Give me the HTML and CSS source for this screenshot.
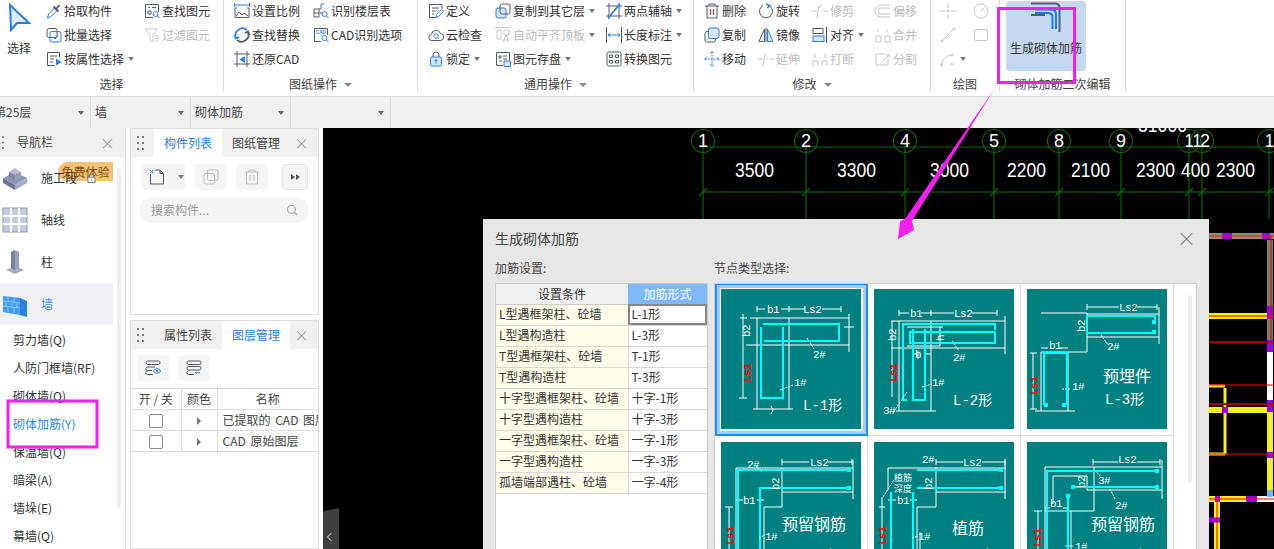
FILE: index.html
```html
<!DOCTYPE html>
<html lang="zh">
<head>
<meta charset="utf-8">
<title>生成砌体加筋</title>
<link rel="stylesheet" href="styles.css">
</head>
<body>
<div class="app">

<header class="ribbon">
  <section class="group g1">
    <div class="body">
      <div class="big-select">
        <svg class="arrow-ic" viewBox="0 0 32 32"><path d="M10 5L29 23H17L11 30Z"/></svg>
        <span>选择</span>
      </div>
      <div class="col">
        <div class="item"><svg class="ic" viewBox="0 0 16 16"><path class="b" d="M1.500 15l1-4 6-6 2.500 2.500-6 6z"/><path class="thick" d="M7.500 3.500l5 5M10.500 5.500l3-3.500"/></svg>拾取构件</div>
        <div class="item"><svg class="ic" viewBox="0 0 16 16"><rect x="1" y="1.500" width="10" height="9" rx="2"/><rect class="b" x="4" y="4.500" width="11" height="10.500" rx="2"/><path class="b" d="M7 10l2 2 3.500-4"/></svg>批量选择</div>
        <div class="item"><svg class="ic" viewBox="0 0 16 16"><path d="M13.500 6V1.500h-12v13H9M4 5h7M4 8h4M4 11h3"/><path class="f" d="M10 7.500l5.500 3.500-5.500 3.500z"/></svg>按属性选择<i class="caret"></i></div>
      </div>
      <div class="col">
        <div class="item"><svg class="ic" viewBox="0 0 16 16"><path d="M9 14.500H1.500v-13h13V9M4 4.500h2M8 4.500h4M4 8h3v3H4z"/><circle class="b" cx="11.500" cy="11" r="2.500"/><path class="b" d="M13.500 13l2 2"/></svg>查找图元</div>
        <div class="item off"><svg class="ic" viewBox="0 0 16 16"><path d="M1 2h13L9 8v7l-3-2V8zM11 9h4M11 11.500h4M11 14h4"/></svg>过滤图元</div>
      </div>
    </div>
    <div class="glabel">选择</div>
  </section>

  <section class="group g2">
    <div class="body">
      <div class="col">
        <div class="item"><svg class="ic" viewBox="0 0 16 16"><path class="b" d="M.500 0v4M15.500 0v4M1 2h14"/><path d="M3 5H1v9.500h14V5h-2"/><path d="M2 13l3-4 3 3 2-2 4 3"/></svg>设置比例</div>
        <div class="item"><svg class="ic" viewBox="0 0 16 16"><path class="b thick" d="M13 3A7 7 0 0 0 2 11M.500 8L2 11.500 5 10"/><path class="thick" d="M3 13A7 7 0 0 0 14 5M15.500 8L14 4.500 11 6"/></svg>查找替换</div>
        <div class="item"><svg class="ic" viewBox="0 0 16 16"><path d="M3 0v16M0 3h16M13 0v16M0 13h16"/><path class="b thick" d="M11 6L7 8.500l4 2.500M7 8.500h4"/></svg>还原CAD</div>
      </div>
      <div class="col">
        <div class="item"><svg class="ic" viewBox="0 0 16 16"><path class="b" d="M8 1h3M8 1v5"/><path d="M1 6h5v4H1zM1 10v4h5v-4M6 6h2M7 10h2"/><circle class="b" cx="11.500" cy="11" r="2.500"/><path class="b" d="M13.500 13l2 2"/></svg>识别楼层表</div>
        <div class="item"><svg class="ic" viewBox="0 0 16 16"><path d="M8 14.500H1.500v-13h13V8"/><text class="mini" x="3" y="7">CAD</text><circle class="b" cx="11.500" cy="11" r="2.500"/><path class="b" d="M13.500 13l2 2"/></svg>CAD识别选项</div>
      </div>
    </div>
    <div class="glabel">图纸操作<i class="caret wide"></i></div>
  </section>

  <section class="group g3">
    <div class="body">
      <div class="col">
        <div class="item"><svg class="ic" viewBox="0 0 16 16"><path d="M14 6V1.500H1.500v13H8M4 5h7M4 8h3M4 11h2"/><path class="b" d="M8 14.500l.5-3 5-5 2 2-5 5z"/></svg>定义</div>
        <div class="item"><svg class="ic" viewBox="0 0 16 16"><path d="M4 13.500a3 3 0 0 1-.5-6 4.500 4.500 0 0 1 8.800-1A3.500 3.500 0 0 1 12 13.500z"/><circle class="b" cx="8" cy="9" r="2.200"/><path class="b" d="M9.500 10.500l1.500 1.500"/></svg>云检查</div>
        <div class="item"><svg class="ic" viewBox="0 0 16 16"><path d="M5 6V4a3 3 0 0 1 6 0v2"/><rect class="fl" x="2.500" y="6" width="11" height="9" rx="1.500"/><path class="w" d="M8 8.500v4M6.500 10L8 8.500 9.500 10"/></svg>锁定<i class="caret"></i></div>
      </div>
      <div class="col">
        <div class="item"><svg class="ic" viewBox="0 0 16 16"><rect class="fl" x="1" y="5" width="10" height="10" rx="2"/><rect x="5" y="1" width="10" height="10" rx="2"/></svg>复制到其它层<i class="caret"></i></div>
        <div class="item off"><svg class="ic" viewBox="0 0 16 16"><path d="M0 .500h16M2 3h4v9H2zM9 3h5v5H9zM8 15l3-7 3 7M9 13h4"/></svg>自动平齐顶板<i class="caret"></i></div>
        <div class="item"><svg class="ic" viewBox="0 0 16 16"><path d="M8 14.500H1.500v-13h13V9M4 5h2v2H4zM8 5h4M4 10h3M8 8h4"/><path class="fl" d="M9 10h6.500v5.500H9z"/></svg>图元存盘<i class="caret"></i></div>
      </div>
      <div class="col">
        <div class="item"><svg class="ic" viewBox="0 0 16 16"><path d="M3 0v16M0 3h16M13 0v16M0 13h16"/><path class="b thick" d="M2 15L14 1"/></svg>两点辅轴<i class="caret"></i></div>
        <div class="item"><svg class="ic" viewBox="0 0 16 16"><path d="M.500 0v16M15.500 0v16"/><path class="b" d="M2 8h12M4.500 6L2 8l2.500 2M11.500 6L14 8l-2.500 2"/></svg>长度标注<i class="caret"></i></div>
        <div class="item"><svg class="ic" viewBox="0 0 16 16"><rect x="1" y="1" width="14" height="14" rx="1.500"/><path d="M3.500 4h3v2.500h-3zM9.500 4h3v2.500h-3zM9.500 9.500h3V12h-3zM3.500 9.500h3V12h-3z"/><path class="b" d="M7.500 5.500H8M8 10.500h.5"/></svg>转换图元</div>
      </div>
    </div>
    <div class="glabel">通用操作<i class="caret wide"></i></div>
  </section>

  <section class="group g4">
    <div class="body">
      <div class="col">
        <div class="item"><svg class="ic" viewBox="0 0 16 16"><path d="M1 3h14M5 3V1h6v2M3 3v12h10V3"/><path class="r" d="M6.500 6v6M9.500 6v6"/></svg>删除</div>
        <div class="item"><svg class="ic" viewBox="0 0 16 16"><rect x="1" y="4.500" width="10.500" height="10.500" rx="2"/><rect class="fl" x="4.500" y="1" width="10.500" height="10.500" rx="2"/></svg>复制</div>
        <div class="item"><svg class="ic" viewBox="0 0 16 16"><path class="b" d="M8 .500v15M.500 8h15M6 2.500L8 .500l2 2M6 13.500l2 2 2-2M2.500 6L.500 8l2 2M13.500 6l2 2-2 2" stroke-dasharray="2 1"/></svg>移动</div>
      </div>
      <div class="col">
        <div class="item"><svg class="ic" viewBox="0 0 16 16"><path d="M5 2.500a6.500 6.500 0 1 0 6 0"/><path class="b thick" d="M8 1l3.500 1.500L9.500 5"/></svg>旋转</div>
        <div class="item"><svg class="ic" viewBox="0 0 16 16"><path d="M6.500 2L1 14.500h5.500z"/><path class="fl" d="M9.500 2l5.500 12.500H9.500z"/><path d="M8 1v14"/></svg>镜像</div>
        <div class="item off"><svg class="ic" viewBox="0 0 16 16"><path d="M0 8h5M7 3L5 15M9 8h1.500M12 8h4" /></svg>延伸</div>
      </div>
      <div class="col">
        <div class="item off"><svg class="ic" viewBox="0 0 16 16"><path d="M0 8h5M7 3L5 15M9 8h1.500M12 8h4M10 1l-3 4"/></svg>修剪</div>
        <div class="item"><svg class="ic" viewBox="0 0 16 16"><rect x="1" y="1.500" width="10" height="5"/><rect class="fl" x="1" y="9" width="11" height="5.500"/><path d="M14.500 0v16"/></svg>对齐<i class="caret"></i></div>
        <div class="item off"><svg class="ic" viewBox="0 0 16 16"><path d="M1 15v-5h5v5M10 15v-5h5v5M4 7l-2-2 2-2M12 7l2-2-2-2M1.500 5h2M12.500 5h2"/></svg>打断</div>
      </div>
      <div class="col">
        <div class="item off"><svg class="ic" viewBox="0 0 16 16"><path d="M15 2H6a6 6 0 0 0 0 12h9M15 5H6a3 3 0 0 0 0 6h9"/></svg>偏移</div>
        <div class="item off"><svg class="ic" viewBox="0 0 16 16"><path d="M1 15v-6h5v6zM10 15V9h5v6zM3 2v3M3 6.500h.5M12 2v3M12.500 6.500h.5"/></svg>合并</div>
        <div class="item off"><svg class="ic" viewBox="0 0 16 16"><path d="M10 3H1v11h12V8M8 10l6-6M11 4h3v3"/></svg>分割</div>
      </div>
    </div>
    <div class="glabel">修改<i class="caret wide"></i></div>
  </section>

  <section class="group g5">
    <div class="body">
      <div class="col">
        <div class="item off"><svg class="ic" viewBox="0 0 16 16"><path d="M8 0v5M8 11v5M0 8h5M11 8h5"/><circle cx="8" cy="8" r="1.200"/></svg></div>
        <div class="item off"><svg class="ic" viewBox="0 0 16 16"><path d="M2 14L14 2"/><circle cx="2" cy="14" r="1"/><circle cx="14" cy="2" r="1"/></svg></div>
        <div class="item off"><svg class="ic" viewBox="0 0 16 16"><path d="M1.500 15a11 11 0 0 1 10-11"/><circle cx="1.500" cy="14" r="1"/><circle cx="12" cy="4" r="1"/><circle cx="12" cy="13" r="1"/></svg><i class="caret"></i></div>
      </div>
      <div class="col">
        <div class="item off"><svg class="ic" viewBox="0 0 16 16"><circle cx="8" cy="8" r="7"/><path d="M8 8l3.500-3.500"/></svg></div>
        <div class="item off"><svg class="ic" viewBox="0 0 16 16"><rect x="1.500" y="2.500" width="13" height="11" rx="1.500"/></svg></div>
      </div>
    </div>
    <div class="glabel">绘图</div>
  </section>

  <section class="group g6">
    <div class="body">
      <div class="big-active">
        <svg class="rebar-ic" viewBox="0 0 32 32"><path d="M0 2.500H24Q28.500 2.500 28.500 7V31M0 14H14"/><path class="blue" d="M4 8.500H20Q25 8.500 25 13.500V28M4 12H17Q21.500 12 21.500 16.500V28"/></svg>
        <span>生成砌体加筋</span>
      </div>
    </div>
    <div class="glabel">砌体加筋二次编辑</div>
  </section>
</header>

<nav class="selectors">
  <div class="select first"><span>第25层</span><i class="caret"></i></div>
  <div class="select"><span>墙</span><i class="caret"></i></div>
  <div class="select"><span>砌体加筋</span><i class="caret"></i></div>
  <div class="select"><span></span><i class="caret"></i></div>
</nav>

<main class="main">
  <aside class="nav">
    <div class="nav-head">
      <svg class="grip-one" viewBox="0 0 4 16"><circle cx="2" cy="2" r="1"/><circle cx="2" cy="7.500" r="1"/><circle cx="2" cy="13" r="1"/></svg>
      <span>导航栏</span><span class="close">×</span>
    </div>
    <div class="badge">免费体验</div>
    <div class="nav-track"></div>
    <div class="nav-big">
      <svg class="nav-ic" viewBox="0 0 26 26"><path fill="#8f97b5" d="M1 13l12-6 12 6-12 7z"/><path fill="#6d7596" d="M1 13v5l12 7v-5z"/><path fill="#a4abc6" d="M25 13v5l-12 7v-5z"/><path fill="#b5bad2" d="M7 7l6-4 6 4-6 3z"/><path fill="#7f87a6" d="M7 7v5l6 3v-5z"/><path fill="#949cb9" d="M19 7v5l-6 3v-5z"/></svg>
      <span>施工段</span>
      <svg class="lock-mini" viewBox="0 0 10 10"><path d="M1 3.500h8v6H1zM3 3.500V1h4v2.500M5 5.500v2"/></svg>
    </div>
    <div class="nav-big">
      <svg class="nav-ic" viewBox="0 0 26 26"><rect width="24" height="24" x="1" y="1" fill="#c5cbe0" stroke="#8b93b2"/><path stroke="#fff" stroke-width="2" d="M9 1v24M17 1v24M1 9h24M1 17h24"/></svg>
      <span>轴线</span>
    </div>
    <div class="nav-big">
      <svg class="nav-ic" viewBox="0 0 26 26"><path fill="#a7adc8" d="M4 21l9-4 9 4-9 4z"/><path fill="#7a82a3" d="M9 3l4-2v20l-4-2z"/><path fill="#99a0be" d="M13 1l4 2v16l-4 2z"/></svg>
      <span>柱</span>
    </div>
    <div class="nav-big on">
      <svg class="nav-ic" viewBox="0 0 26 26"><path fill="#3f9bf0" d="M1 5l17 2v17L1 21z"/><path fill="#2b82dc" d="M18 7l7 3v16l-7-2z"/><path stroke="#8cc4f7" fill="none" d="M1 10l17 2M1 15l17 2M6 6v5M12 7v5M4 11v5M10 12v5M15 12v5M6 16v5M12 17v5"/></svg>
      <span>墙</span>
    </div>
    <ul class="nav-list">
      <li>剪力墙(Q)</li>
      <li>人防门框墙(RF)</li>
      <li>砌体墙(Q)</li>
      <li class="on">砌体加筋(Y)</li>
      <li>保温墙(Q)</li>
      <li>暗梁(A)</li>
      <li>墙垛(E)</li>
      <li>幕墙(Q)</li>
    </ul>
  </aside>

  <div class="panels">
    <section class="panel upper">
      <div class="tabs">
        <svg class="grip" viewBox="0 0 7 15"><path d="M0 0h2v2H0zM5 0h2v2H5zM0 6h2v2H0zM5 6h2v2H5zM0 12h2v2H0zM5 12h2v2H5z"/></svg>
        <span class="tab on">构件列表</span><span class="tab">图纸管理</span>
        <span class="close">×</span>
      </div>
      <div class="tools">
        <button class="tool split"><svg class="ic ink" viewBox="0 0 16 16"><path d="M1.500 5v10h13V4.500L11 1H6"/><path d="M11 1v3.500h3.500"/><path class="b" d="M1 1l3 3M4 1L1 4"/></svg></button><button class="tool drop"><i class="caret"></i></button>
        <button class="tool w32"><svg class="ic off-ic" viewBox="0 0 16 16"><rect x="1" y="4.500" width="10.500" height="10.500" rx="1.500"/><rect x="4.500" y="1" width="10.500" height="10.500" rx="1.500"/></svg></button>
        <button class="tool w32"><svg class="ic off-ic" viewBox="0 0 16 16"><path d="M1 3h14M5 3V1h6v2M2.500 3v12h11V3M6 6v6M10 6v6"/></svg></button>
        <button class="tool more"><span class="tri-r"></span><span class="tri-r"></span></button>
      </div>
      <div class="search"><span>搜索构件...</span><svg class="search-ic" viewBox="0 0 12 12"><circle cx="5.500" cy="5.500" r="4"/><path d="M8.500 8.500L11 11"/></svg></div>
    </section>

    <section class="panel lower">
      <div class="tabs">
        <svg class="grip" viewBox="0 0 7 15"><path d="M0 0h2v2H0zM5 0h2v2H5zM0 6h2v2H0zM5 6h2v2H5zM0 12h2v2H0zM5 12h2v2H5z"/></svg>
        <span class="tab">属性列表</span><span class="tab on">图层管理</span>
        <span class="close">×</span>
      </div>
      <div class="tools lt">
        <button class="tool w32"><svg class="ic ink" viewBox="0 0 16 16"><rect x="1" y="1" width="14" height="3.500" rx="1.700"/><path d="M10 7H2.500a1.700 1.700 0 0 0 0 3.500H7M8 14.500H2.500a1.700 1.700 0 0 1 0-3.500"/><ellipse class="b" cx="12" cy="11" rx="3.500" ry="2.200"/><circle class="b" cx="12" cy="11" r=".8"/></svg></button>
        <button class="tool w32"><svg class="ic ink" viewBox="0 0 16 16"><rect x="1" y="1" width="14" height="3.500" rx="1.700"/><rect x="1" y="6.500" width="14" height="3.500" rx="1.700"/><path d="M8 14.500H2.500a1.700 1.700 0 0 1 0-3.500"/><path class="b" d="M9 12l1.200 1.500L11.500 12l1.200 1.500L14 12"/></svg></button>
      </div>
      <table class="layers">
        <colgroup><col class="c1"><col class="c2"><col></colgroup>
        <thead><tr><th>开 / 关</th><th>颜色</th><th>名称</th></tr></thead>
        <tbody>
          <tr><td><span class="check"></span></td><td><span class="tri-r gr"></span></td><td class="nm">已提取的 CAD 图层</td></tr>
          <tr><td><span class="check"></span></td><td><span class="tri-r gr"></span></td><td class="nm">CAD 原始图层</td></tr>
        </tbody>
      </table>
    </section>
  </div>

  <div class="canvas">
    <svg class="cad" viewBox="323 128 951 421">
      <g class="grn">
        <path d="M703 147H1274M703 192H1274M703 141V219M806 141V219M905 141V219M994 141V219M1059 141V219M1121 141V219M1189 141V219M1202 141V219M1269 141V219"/>
        <path d="M699 196l8-8M802 196l8-8M901 196l8-8M990 196l8-8M1055 196l8-8M1117 196l8-8M1185 196l8-8M1198 196l8-8M1265 196l8-8"/>
        <circle cx="703" cy="141" r="11.500"/><circle cx="806" cy="141" r="11.500"/><circle cx="905" cy="141" r="11.500"/><circle cx="994" cy="141" r="11.500"/><circle cx="1059" cy="141" r="11.500"/><circle cx="1121" cy="141" r="11.500"/><circle cx="1189" cy="141" r="11.500"/><circle cx="1202" cy="141" r="11.500"/><circle cx="1269" cy="141" r="11.500"/>
      </g>
      <g class="num">
        <text x="703" y="147">1</text><text x="806" y="147">2</text><text x="905" y="147">4</text><text x="994" y="147">5</text><text x="1059" y="147">8</text><text x="1121" y="147">9</text><text x="1193" y="147" textLength="17" lengthAdjust="spacingAndGlyphs">11</text><text x="1205" y="147">2</text><text x="1274" y="147" textLength="18" lengthAdjust="spacingAndGlyphs">15</text>
      </g>
      <g class="dim">
        <text x="735" y="177" textLength="39" lengthAdjust="spacingAndGlyphs">3500</text>
        <text x="837" y="177" textLength="39" lengthAdjust="spacingAndGlyphs">3300</text>
        <text x="930" y="177" textLength="39" lengthAdjust="spacingAndGlyphs">3000</text>
        <text x="1007" y="177" textLength="39" lengthAdjust="spacingAndGlyphs">2200</text>
        <text x="1071" y="177" textLength="39" lengthAdjust="spacingAndGlyphs">2100</text>
        <text x="1136" y="177" textLength="39" lengthAdjust="spacingAndGlyphs">2300</text>
        <text x="1181" y="177" textLength="29" lengthAdjust="spacingAndGlyphs">400</text>
        <text x="1216" y="177" textLength="39" lengthAdjust="spacingAndGlyphs">2300</text>
        <text x="1138" y="132" textLength="49" lengthAdjust="spacingAndGlyphs">31000</text>
      </g>
      <g class="walls">
        <path stroke="#8d8d72" stroke-width="6" d="M1205 236H1274"/><path stroke="#9a00f0" stroke-width="6" d="M1222 236H1232M1262 236H1270"/><path stroke="#e02020" d="M1205 236H1274"/>
        <path stroke="#f6f020" stroke-width="6" d="M1205 316H1267M1205 410H1267M1270 412V452M1270 458V490M1205 499H1246M1217 502V549"/>
        <path stroke="#f6f020" stroke-width="3" d="M1205 386H1225M1225 388V455M1205 454H1225"/>
        <path stroke="#808060" stroke-width="6" d="M1270 240V306M1270 319V340"/>
        <path stroke="#fff" stroke-width="6" d="M1270 352V400M1257 499H1274"/>
        <path stroke="#60c0f0" stroke-width="6" d="M1270 490V497"/>
        <path stroke="#9a00f0" stroke-width="6" d="M1270 306V319M1270 340V352M1270 400V412M1270 452V458M1222 410H1228M1215 499H1220M1246 499H1257"/>
        <path stroke="#9a00f0" stroke-width="5" d="M1209 520H1220"/>
        <path stroke="#f00000" d="M1205 316H1274M1205 385H1274M1205 454H1274M1271 236V340M1205 499H1274M1217 497V549"/>
        <path stroke="#a00000" stroke-width="2" d="M1205 342H1274M1205 404H1274"/>
      </g>
    </svg>
    <div class="edge-tab"></div>

    <section class="dialog">
      <header class="dlg-head"><h1>生成砌体加筋</h1><span class="dlg-x">×</span></header>
      <div class="dlg-body">
        <div class="dlg-left">
          <div class="dlg-label">加筋设置:</div>
          <div class="rules-wrap">
            <table class="rules">
              <thead><tr><th>设置条件</th><th class="hl">加筋形式</th></tr></thead>
              <tbody>
                <tr><td>L型遇框架柱、砼墙</td><td class="cur">L-1形</td></tr>
                <tr><td>L型遇构造柱</td><td>L-3形</td></tr>
                <tr><td>T型遇框架柱、砼墙</td><td>T-1形</td></tr>
                <tr><td>T型遇构造柱</td><td>T-3形</td></tr>
                <tr><td>十字型遇框架柱、砼墙</td><td>十字-1形</td></tr>
                <tr><td>十字型遇构造柱</td><td>十字-3形</td></tr>
                <tr><td>一字型遇框架柱、砼墙</td><td>一字-1形</td></tr>
                <tr><td>一字型遇构造柱</td><td>一字-3形</td></tr>
                <tr><td>孤墙端部遇柱、砼墙</td><td>一字-4形</td></tr>
              </tbody>
            </table>
          </div>
        </div>
        <div class="dlg-right">
          <div class="dlg-label">节点类型选择:</div>
          <div class="gallery">
            <div class="grid">

              <figure class="node sel">
                <svg class="dg" viewBox="0 0 140 140">
                  <path class="wl" d="M36 17v6M68 17v6M120 17v6M36 20h8M60 20h24M101 20h19M29 29H128M25 56H128M36 29V120M68 29V120M32 120H72M128 25V63M22 25V109M18 109h8M19 29h7M123 38h10M50 117l2 4-2 4"/>
                  <path class="cy" d="M62 38V109H40V38M42 35H118V52H43"/>
                  <path class="ld" d="M86 49l7 11M59 101l13-5"/>
                  <text class="sm" x="46" y="24">b1</text><text class="sm" x="82" y="24">Ls2</text>
                  <text class="sm" x="92" y="69">2#</text><text class="sm" x="73" y="97">1#</text>
                  <text class="sm" transform="translate(29,48) rotate(-90)">b2</text>
                  <text class="sm red" transform="translate(30,93) rotate(-90)">Ls1</text>
                  <text class="lg" x="82" y="121">L-1形</text>
                </svg>
              </figure>

              <figure class="node">
                <svg class="dg" viewBox="0 0 140 140">
                  <path class="wl" d="M25 21v6M57 21v6M123 21v6M25 24h10M47 24h33M98 24h25M17 32H131M17 59H131M25 32V122M57 32V122M22 122H62M131 27V65M18 32V108M33 38H66V57H33M66 38h3M44 62v8M38 65h5M50 65h7"/>
                  <path class="cy" d="M33 111H29V35H121V41M121 43H36V54H121V43M39 40V111H51V40"/>
                  <path class="ld" d="M78 52l7 10M48 98l10-3M33 103L19 124"/>
                  <text class="sm" x="36" y="28">b1</text><text class="sm" x="80" y="28">Ls2</text>
                  <text class="sm" x="41" y="69">b</text><text class="sm" x="79" y="72">2#</text>
                  <text class="sm" x="58" y="97">1#</text><text class="sm" x="9" y="125">3#</text>
                  <text class="sm" transform="translate(22,52) rotate(-90)">b2</text>
                  <text class="sm" transform="translate(70,52) rotate(-90)">h</text>
                  <text class="sm red" transform="translate(23,93) rotate(-90)">Ls1</text>
                  <text class="lg" x="79" y="116">L-2形</text>
                </svg>
              </figure>

              <figure class="node">
                <svg class="dg" viewBox="0 0 140 140">
                  <path class="wl" d="M60 15v6M130 15v6M60 18h32M110 18h20M14 24H60V63H14V122M60 25H132M60 48H132M132 18V55M41 63V122M8 122H48M6 64V120M3 64h7M3 120h7M14 59h7M33 59h8"/>
                  <path class="cy" d="M128 34V27H60V43M60 44H128V41M17 116V64H40V116"/>
                  <path class="bl" d="M125 31h4v4h-4zM125 41h4v4h-4zM17 114h4v4h-4zM35 114h4v4h-4z"/>
                  <path class="ld" d="M74 46l7 10M35 100h9"/>
                  <text class="sm" x="92" y="22">Ls2</text><text class="sm" x="22" y="60">b1</text>
                  <text class="sm" x="80" y="61">2#</text><text class="sm" x="45" y="101">1#</text>
                  <text class="sm" transform="translate(58,43) rotate(-90)">b2</text>
                  <text class="sm red" transform="translate(11,106) rotate(-90)">Ls1</text>
                  <text class="hz" x="76" y="93">预埋件</text>
                  <text class="lg" x="78" y="115">L-3形</text>
                </svg>
              </figure>

              <figure class="node">
                <svg class="dg" viewBox="0 0 140 140">
                  <path class="wl" d="M61 17v6M131 17v6M61 20h27M107 20h24M15 26H132M15 26V140M61 26V65H43M61 50H132M132 18V57M43 65V140M15 58h7M36 58h7M8 65V107M4 65h8M46 120V140"/>
                  <path class="cy" d="M129 28H17V140M129 46H39V140"/>
                  <path class="bl" d="M126 26h4v4h-4zM126 44h4v4h-4z"/>
                  <path class="ld" d="M38 96l6-3M35 24l6 6"/>
                  <text class="sm" x="26" y="26">2#</text><text class="sm" x="89" y="24">Ls2</text>
                  <text class="sm" x="22" y="62">b1</text><text class="sm" x="44" y="98">1#</text>
                  <text class="sm" transform="translate(58,48) rotate(-90)">b2</text>
                  <text class="sm red" transform="translate(13,103) rotate(-90)">Ls1</text>
                  <text class="hz" x="61" y="88">预留钢筋</text>
                  <text class="lg" x="72" y="118">L-4形</text>
                </svg>
              </figure>

              <figure class="node">
                <svg class="dg" viewBox="0 0 140 140">
                  <path class="wl" d="M62 17v6M131 17v6M62 20h27M108 20h23M14 26H132M14 26V48M62 26V65H43M62 50H132M131 18V57M43 65V140M14 58h8M36 58h7M8 55V107M5 65h6M46 90V140"/>
                  <path class="cy" d="M128 28H43M128 46H43M17 50V140M39 50V140"/>
                  <path class="bl" d="M125 26h4v4h-4zM125 44h4v4h-4z"/>
                  <path class="ld" d="M20 38L9 55M38 96l6-2"/>
                  <text class="sm" x="48" y="21">2#</text><text class="sm" x="89" y="24">Ls2</text>
                  <text class="tn" x="20" y="39">植筋</text><text class="tn" x="20" y="50">深度</text>
                  <text class="sm" x="23" y="62">b1</text><text class="sm" x="44" y="98">1#</text>
                  <text class="sm" transform="translate(58,48) rotate(-90)">b2</text>
                  <text class="sm red" transform="translate(12,103) rotate(-90)">Ls1</text>
                  <text class="hz" x="78" y="92">植筋</text>
                  <text class="lg" x="76" y="118">L-5形</text>
                </svg>
              </figure>

              <figure class="node">
                <svg class="dg" viewBox="0 0 140 140">
                  <path class="wl" d="M66 17v6M133 17v6M66 20h25M110 20h23M18 25H135M18 25V140M67 25V69H18M26 34H60M26 34V62M60 34V48M60 48H135M135 18V57M44 69V140M11 69V107M7 69h8M18 66h5M36 66h5"/>
                  <path class="cy" d="M131 29H20V140M131 45H46M41 54V140"/>
                  <path class="bl" d="M128 27h4v4h-4zM128 43h4v4h-4zM44 43h4v4h-4zM39 52h4v4h-4z"/>
                  <path class="ld" d="M68 28l5 6M83 47l5 10M38 104h8"/>
                  <text class="sm" x="91" y="21">Ls2</text><text class="sm" x="71" y="42">3#</text>
                  <text class="sm" x="88" y="67">2#</text><text class="sm" x="23" y="65">b1</text>
                  <text class="sm" x="48" y="108">1#</text>
                  <text class="sm" transform="translate(58,46) rotate(-90)">b2</text>
                  <text class="sm red" transform="translate(14,105) rotate(-90)">Ls1</text>
                  <text class="hz" x="64" y="88">预留钢筋</text>
                  <text class="lg" x="76" y="118">L-6形</text>
                </svg>
              </figure>

            </div>
            <div class="gal-track"></div>
          </div>
        </div>
      </div>
    </section>
  </div>
</main>

<svg class="marks" viewBox="0 0 1274 549">
  <rect x="998.500" y="8.500" width="76" height="74"/>
  <rect x="8" y="401" width="89" height="46"/>
  <path class="head" d="M995 88L912 221 914 230 898 239 900 221 905 219Z"/>
</svg>

</div>
</body>
</html>
```
FILE: styles.css
```css
*{box-sizing:border-box}
html,body{margin:0;height:100%;overflow:hidden}
body{background:#fff;color:#333;font:12px/1.2 "Noto Sans CJK SC","Noto Sans",sans-serif}
.app{position:relative;width:1274px;height:549px;overflow:hidden;display:flex;flex-direction:column}

/* ribbon */
.ribbon{display:flex;height:97px;border-bottom:1px solid #dedede;background:#fff;flex:none}
.group{display:flex;flex-direction:column;height:92px;border-right:1px solid #dcdcdc;flex:none}
.body{display:grid;height:72px;margin-top:-1px}
.glabel{height:21px;line-height:26px;text-align:center;white-space:nowrap;color:#444}
.g1{width:224px}.g1 .body{grid-template-columns:46px 98px 1fr}
.g2{width:194px}.g2 .body{grid-template-columns:79px 1fr;padding-left:10px}
.g3{width:276px}.g3 .body{grid-template-columns:67px 111px 1fr;padding-left:10px}
.g4{width:237px}.g4 .body{grid-template-columns:54px 54px 63px 1fr;padding-left:10px}
.g5{width:69px}.g5 .body{grid-template-columns:33px 1fr;padding-left:9px}
.g6{width:126px}.g6 .body{padding:2px 0 0 6px}
.col{display:flex;flex-direction:column}
.item{height:24px;display:flex;align-items:center;gap:2px;white-space:nowrap}
.off{color:#bdbdbd}
.ic{width:16px;height:16px;flex:none;fill:none;stroke:#515a6b;stroke-width:1;overflow:visible;--ac:#2b7de9}
.off .ic{stroke:#c6c6c6;--ac:#c6c6c6}
.ic .b{stroke:var(--ac)}
.ic .f{fill:var(--ac);stroke:none}
.ic .fl{fill:#d6e7fb;stroke:var(--ac)}
.ic .thick{stroke-width:1.800}
.ic .w{stroke:#2b7de9}
.ic .r{stroke:#e02020}
.ic .mini{font:bold 4.500px "Liberation Sans",sans-serif;fill:#2b7de9;stroke:none}
.off-ic{stroke:#bcbcbc}
.caret{display:inline-block;width:0;height:0;border:3px solid transparent;border-top:4px solid #777;border-bottom:0;margin-left:2px;flex:none}
.caret.wide{border-width:4px 4px 0;border-top-color:#888;margin-left:7px;vertical-align:2px}
.big-select{display:flex;flex-direction:column;align-items:flex-start}
.arrow-ic{width:32px;height:32px;margin-top:1px;fill:#dcebfb;stroke:#2b7de9;stroke-width:2}
.big-select span{margin:8px 0 0 7px;line-height:16px}
.big-active{width:80px;height:70px;background:#c3d9f0;border-radius:4px;display:flex;flex-direction:column;align-items:center}
.rebar-ic{width:32px;height:32px;margin-left:2px;fill:none;stroke:#545e77;stroke-width:2}
.rebar-ic .blue{stroke:#1b78f0}
.big-active span{margin-top:7px;line-height:16px;white-space:nowrap}

/* selector bar */
.selectors{display:flex;height:31px;background:#f0f0f0;flex:none}
.select{width:100px;height:31px;padding:0 4px;border-right:1px solid #dcdcdc;display:flex;align-items:center;justify-content:space-between;overflow:hidden;color:#444;font-size:12px}
.select.first{width:91px;padding:0 4px 0 0}
.select.first span{margin-left:-6px}
.select .caret{border-top-color:#666;margin-right:2px}

/* main */
.main{display:flex;flex:1;min-height:0}
.nav{position:relative;width:126px;flex:none;border-right:1px solid #dedede;background:#fff;overflow:hidden}
.nav-head{height:29px;background:#f0f0f0;display:flex;align-items:center;padding-left:1px;color:#444}
.grip-one{width:4px;height:16px;fill:#777;margin-right:12px;flex:none}
.close{margin-left:auto;font-size:15px;line-height:20px;font-weight:300;color:#888;padding-right:10px}
.badge{position:absolute;left:58px;top:34px;width:55px;height:19px;background:#f1c277;border-radius:10px 0 0 10px;color:#7a4d10;line-height:19px;text-align:center}
.nav-track{position:absolute;left:117px;top:40px;width:4px;height:340px;border-radius:2px;background:#eee}
.nav-big{width:113px;height:42px;display:flex;align-items:center;padding-left:2px;gap:13px;position:relative}
.nav-big.on{background:#f0f1f5}
.nav-big.on span{color:#3f8fe8}
.nav-ic{width:26px;height:26px;flex:none}
.lock-mini{position:absolute;left:87px;top:17px;width:9px;height:9px;fill:#fff;stroke:#666;stroke-width:1}
.nav-list{list-style:none;margin:1px 0 0;padding:0}
.nav-list li{height:28px;line-height:28px;padding-left:13px;white-space:nowrap}
.nav-list li.on{color:#2688f0}

.panels{width:189px;margin:0 4px;flex:none;display:flex;flex-direction:column;gap:5px}
.panel{border:1px solid #dedede;background:#fff;overflow:hidden}
.upper{height:187px}
.lower{flex:1;min-height:0}
.tabs{height:28px;background:#f0f0f0;display:flex;align-items:center;position:relative;padding-left:23px}
.lower .tabs{padding-left:0}
.grip{position:absolute;left:6px;top:7px;width:7px;height:15px;fill:#777}
.tab{width:68px;height:28px;line-height:28px;text-align:center;color:#444;flex:none}
.tab.on{background:#fff;color:#1e7fe6}
.lower .tab:first-of-type{width:91px;padding-left:23px}
.tabs .close{position:absolute;right:9px;top:4px;padding:0}
.tools{display:flex;padding:7px 0 0 10px;height:33px}
.tools.lt{padding:6px 0 0 6px;height:39px;gap:9px}
.tool{width:32px;height:26px;border:0;padding:0;background:#f5f5f5;border-radius:4px;display:flex;align-items:center;justify-content:center;flex:none}
.tool.split{border-radius:4px 0 0 4px}
.tool.drop{width:13px;margin-left:0;border-radius:0 4px 4px 0;margin-right:9px}
.tool.w32{margin-right:9px}
.tools.lt .tool.w32{margin-right:0}
.tool.more{width:26px;margin-left:5px;border:1px solid #e2e2e2;gap:1px}
.ink{stroke:#4c5568}
.tri-r{display:inline-block;width:0;height:0;border:3px solid transparent;border-left:4px solid #555;border-right:0}
.tri-r.gr{border-left-color:#777;border-width:4px 0 4px 4px}
.search{height:26px;margin:7px 9px 0 8px;border-radius:13px;background:#f5f5f5;display:flex;align-items:center;justify-content:space-between;padding:0 11px 0 12px;color:#999}
.search-ic{width:12px;height:12px;fill:none;stroke:#aaa;stroke-width:1.200}
.layers{width:187px;table-layout:fixed;border-collapse:collapse;border-top:1px solid #dedede}
.layers .c1{width:50px}
.layers .c2{width:36px}
.layers th,.layers td{height:21px;padding:0;border-right:1px solid #dedede;border-bottom:1px solid #dedede;font-weight:400;text-align:center;white-space:nowrap;overflow:hidden;color:#444}
.layers th:last-child,.layers td:last-child{border-right:0}
.layers td.nm{text-align:left;padding-left:5px;word-spacing:2px}
.check{display:inline-block;width:14px;height:14px;border:1px solid #888;border-radius:2px;vertical-align:middle}

/* canvas */
.canvas{flex:1;position:relative;background:#000;overflow:hidden;min-width:0}
.cad{display:block;width:951px;height:421px}
.grn{fill:none;stroke:#0d6a0d;stroke-width:1.100}
.num{font:18px "Liberation Sans",sans-serif;fill:#fff;text-anchor:middle}
.dim{font:20px "Liberation Sans",sans-serif;fill:#fff}
.walls{fill:none}
.edge-tab{position:absolute;left:0;bottom:0;width:16px;height:41px;background:#3f3f3f;clip-path:polygon(0 8%,100% 0,100% 100%,0 100%)}
.edge-tab::after{content:"";position:absolute;left:5px;top:26px;width:5px;height:5px;border-left:1px solid #bbb;border-bottom:1px solid #bbb;transform:rotate(45deg)}

/* dialog */
.dialog{position:absolute;left:160px;top:91px;width:726px;height:340px;background:#e7e7e7;overflow:hidden}
.dlg-head{height:38px;display:flex;align-items:center;justify-content:space-between;padding:0 13px 0 12px}
.dlg-head h1{margin:0;font-size:14px;font-weight:400;color:#444}
.dlg-x{font-size:19px;font-weight:300;color:#777;line-height:24px}
.dlg-body{display:flex;padding-left:12px;gap:6px}
.dlg-label{height:26px;line-height:22px;color:#444}
.dlg-left{width:213px;flex:none}
.rules-wrap{height:300px;background:#fff;border:1px solid #ccc}
.rules{width:211px;table-layout:fixed;border-collapse:collapse}
.rules th{height:20px;font-weight:400;background:#f0f0f0;border-bottom:1px solid #ccc;padding:0}
.rules th.hl{width:79px;background:#7db8fb;color:#fff}
.rules td{height:21px;padding:0 0 0 3px;background:#fffde8;border-bottom:1px solid #d8d8d8;white-space:nowrap;overflow:hidden}
.rules td+td{background:#fff;border-left:1px solid #d8d8d8}
.rules td.cur{outline:2px solid #888;outline-offset:-2px}
.dlg-right{width:483px;flex:none}
.gallery{position:relative;width:483px;height:300px;background:#fff;border:1px solid #ccc;overflow:hidden}
.grid{display:grid;grid-template-columns:repeat(3,153px);grid-auto-rows:153px;margin-top:-1px}
.node{margin:0;padding:6px;border-right:1px solid #ddd;border-bottom:1px solid #ddd;background:#fff;height:153px}
.node.sel{padding:4px;border:2px solid #1890ff;box-shadow:inset 0 0 0 3px #a6cbf8}
.dg{display:block;width:140px;height:140px;background:#008080;overflow:hidden}
.wl{fill:none;stroke:#fff;stroke-width:1}
.cy{fill:none;stroke:#0ff;stroke-width:2}
.bl{fill:#0ff}
.ld{fill:none;stroke:#fff;stroke-width:1;stroke-dasharray:2 1}
.dg text{fill:#fff;stroke:none}
.sm{font:11px "Liberation Mono",monospace;letter-spacing:-.5px}
.dg .red{fill:#f00;font-weight:700}
.lg{font:14px "Liberation Mono","Noto Sans CJK SC",monospace}
.hz{font:16px "Noto Sans CJK SC",sans-serif}
.tn{font:9px "Noto Sans CJK SC",sans-serif}
.gal-track{position:absolute;left:473px;top:11px;width:4px;height:188px;background:#eee;border-radius:2px}

/* annotations */
.marks{position:absolute;left:0;top:0;width:1274px;height:549px;fill:none;stroke:#f61df0;stroke-width:3;pointer-events:none}
.marks .head{fill:#f61df0;stroke:none}
```
